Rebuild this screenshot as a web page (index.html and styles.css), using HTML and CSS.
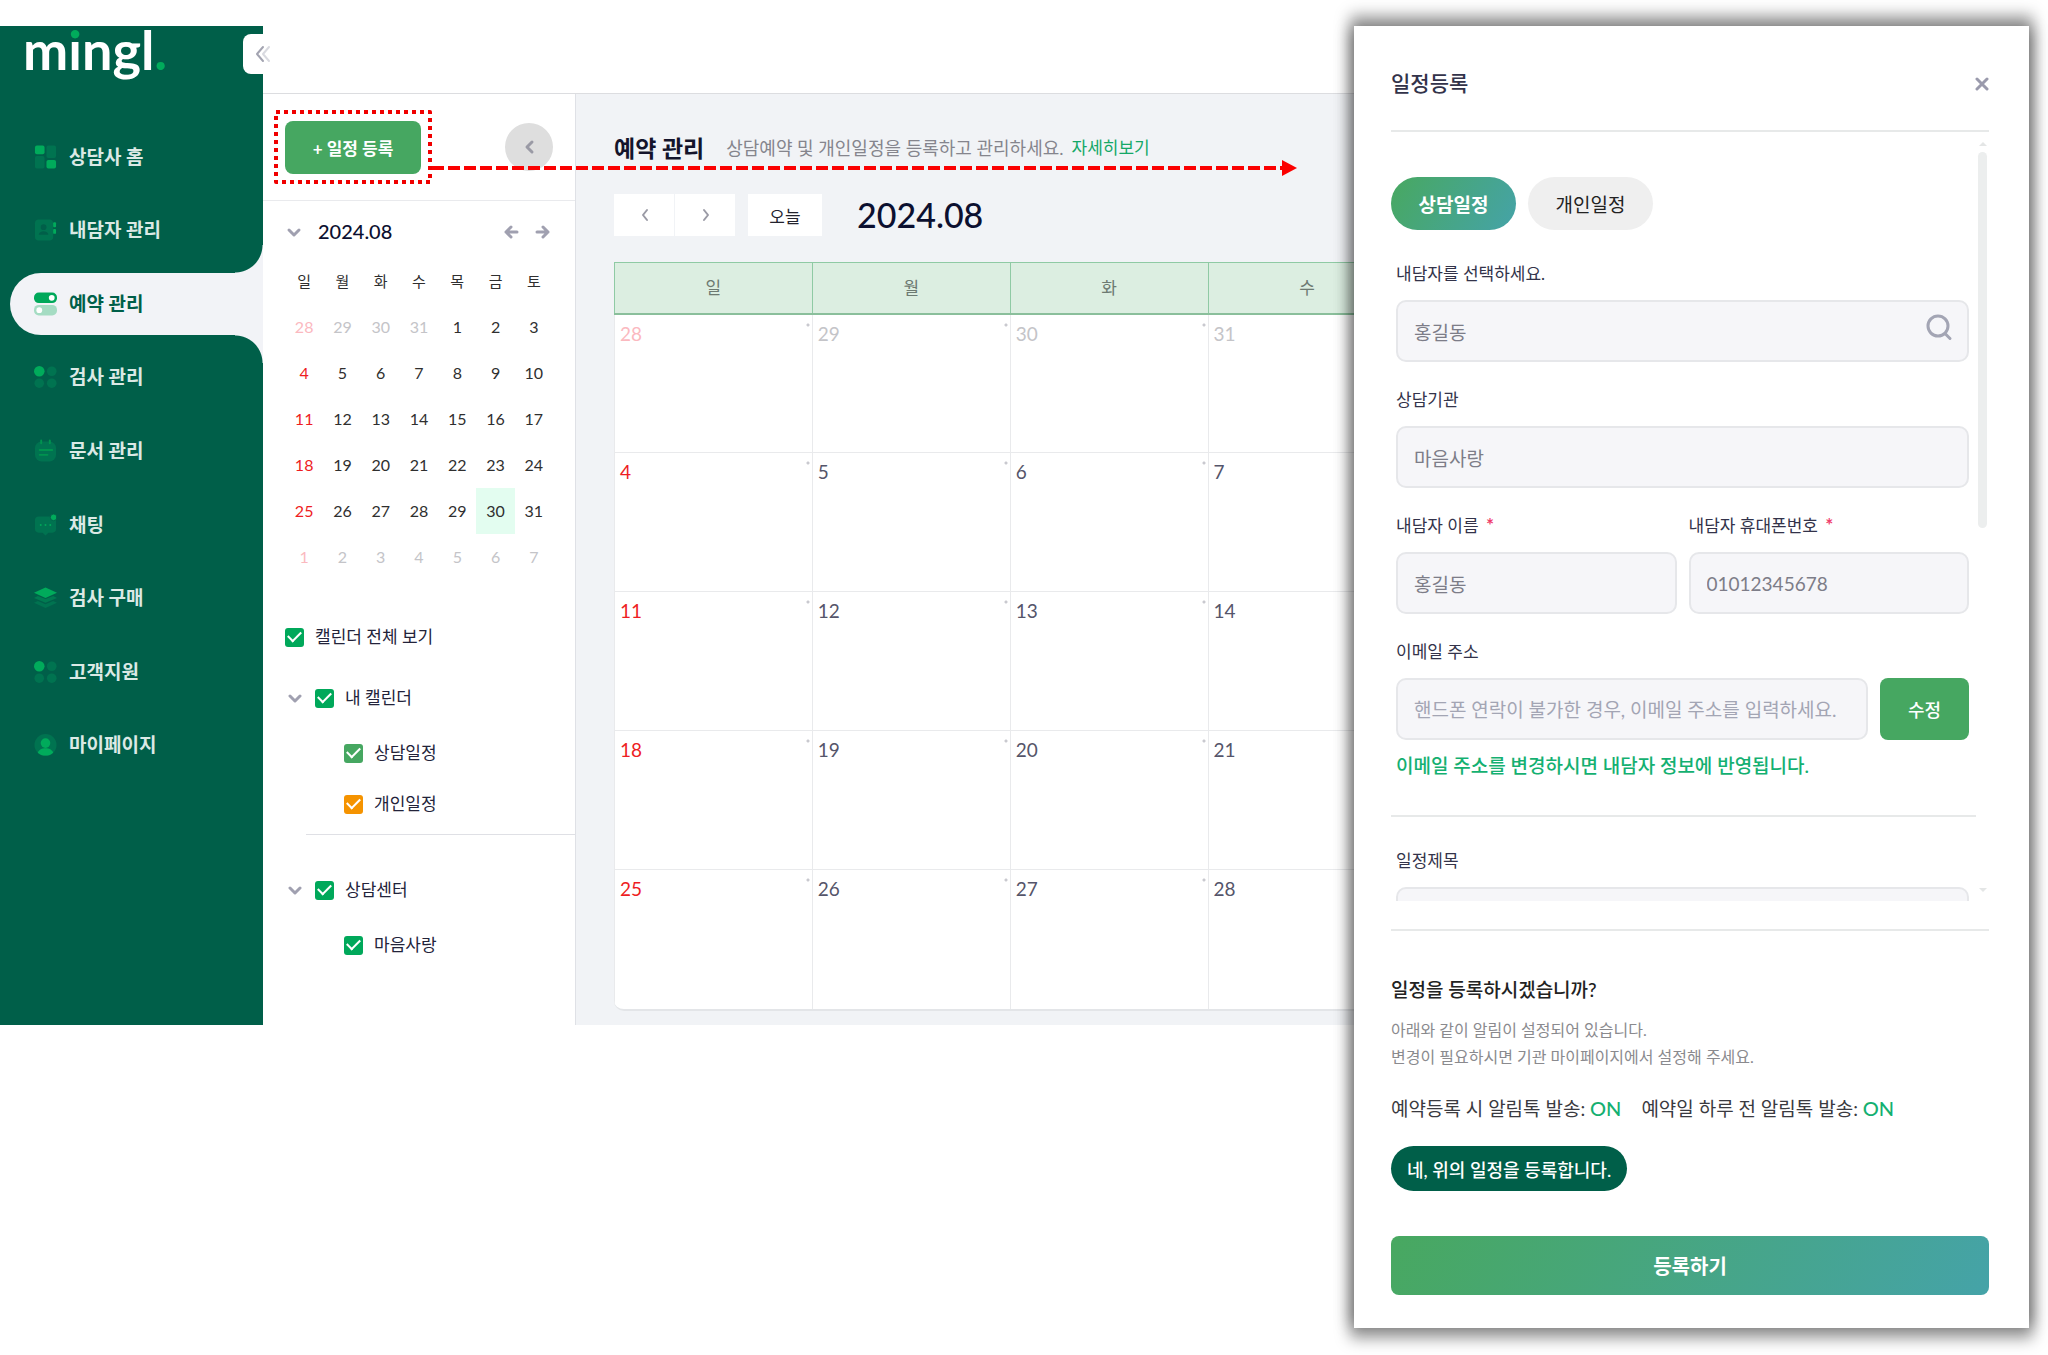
FILE: index.html
```html
<!DOCTYPE html>
<html lang="ko">
<head>
  <meta charset="UTF-8" />
  <meta name="viewport" content="width=device-width, initial-scale=1.0"/>
  <title>mingl. 예약 관리</title>
  <link rel="stylesheet" href="styles.css">
</head>
<body>
  <div class="app">
    <aside class="sidebar">
      <a class="logo" href="#">m<span class="logo-i">i</span>ngl<span class="logo-dot">.</span></a>
      <button class="collapse-button" aria-label="메뉴 접기">
        <svg width="20" height="20" viewBox="0 0 20 20"><path d="M10 3L4 10l6 7" stroke="#a3a4b1"/><path d="M16 3l-6 7 6 7" stroke="#d9dae0"/></svg>
      </button>
      <nav>
        <ul class="menu">
          <li><a href="#">
            <svg viewBox="0 0 24 24"><rect x="1" y="0" width="10" height="9" rx="2" fill="#00ab5b"/><rect x="13" y="0" width="10" height="13" rx="2" fill="#007350"/><rect x="1" y="11" width="10" height="13" rx="2" fill="#007350"/><rect x="13" y="15" width="10" height="9" rx="2" fill="#00ab5b"/></svg>
            상담사 홈</a></li>
          <li><a href="#">
            <svg viewBox="0 0 24 24"><rect x="1" y="1" width="19" height="22" rx="4" fill="#007350"/><circle cx="10" cy="9" r="3" fill="#005f49"/><path d="M5 17c0-5 10-5 10 0z" fill="#005f49"/><rect x="20" y="4" width="3" height="5" rx="1" fill="#00ab5b"/><rect x="20" y="11" width="3" height="5" rx="1" fill="#00ab5b"/></svg>
            내담자 관리</a></li>
          <li class="active"><a href="#">
            <svg viewBox="0 0 24 24"><rect x="0" y="0" width="24" height="11" rx="5" fill="#00a85a"/><circle cx="18.500" cy="5.500" r="3" fill="#fff"/><rect x="0" y="13" width="24" height="11" rx="5" fill="#a5dcc3"/><circle cx="5.500" cy="18.500" r="3" fill="#fff"/></svg>
            예약 관리</a></li>
          <li><a href="#">
            <svg viewBox="0 0 24 24"><circle cx="5.500" cy="6" r="5.500" fill="#00ab5b"/><circle cx="18.500" cy="6" r="5" fill="#007350"/><circle cx="5.500" cy="18.500" r="5" fill="#007350"/><circle cx="18.500" cy="18.500" r="5" fill="#007350"/></svg>
            검사 관리</a></li>
          <li><a href="#">
            <svg viewBox="0 0 24 24"><rect x="1" y="2" width="22" height="21" rx="7" fill="#007350"/><path d="M7.500 1v3M16.500 1v3M6 11h13M6 16h8" stroke="#00934f" stroke-width="2" stroke-linecap="round"/></svg>
            문서 관리</a></li>
          <li><a href="#">
            <svg viewBox="0 0 24 24"><path d="M5 3h14a4 4 0 0 1 4 4v9a4 4 0 0 1-4 4h-4l-3 3-3-3H5a4 4 0 0 1-4-4V7a4 4 0 0 1 4-4z" fill="#007350"/><circle cx="7" cy="12" r="1" fill="#00a85a"/><circle cx="12" cy="12" r="1" fill="#00a85a"/><circle cx="17" cy="12" r="1" fill="#00a85a"/><circle cx="20.500" cy="4" r="3.500" fill="#00ab5b" stroke="#005f49"/></svg>
            채팅</a></li>
          <li><a href="#">
            <svg viewBox="0 0 24 24"><path d="M0 17l12 5.500L24 17l-4-2-8 3.500L4 15z" fill="#007350"/><path d="M0 12l12 5 12-5-4-2-8 3-8-3z" fill="#007b51"/><path d="M0 6.500L12 1l12 5.500L12 12z" fill="#00ab5b"/></svg>
            검사 구매</a></li>
          <li><a href="#">
            <svg viewBox="0 0 24 24"><circle cx="5.500" cy="6" r="5.500" fill="#00ab5b"/><circle cx="18.500" cy="6" r="5" fill="#007350"/><circle cx="5.500" cy="18.500" r="5" fill="#007350"/><circle cx="18.500" cy="18.500" r="5" fill="#007350"/></svg>
            고객지원</a></li>
          <li><a href="#">
            <svg viewBox="0 0 24 24"><circle cx="12" cy="12" r="11.500" fill="#007350"/><circle cx="12" cy="10" r="5" fill="#00ab5b"/><path d="M4 20c2-6 14-6 16 0-4 4-12 4-16 0z" fill="#00ab5b"/></svg>
            마이페이지</a></li>
        </ul>
      </nav>
    </aside>

    <div class="content">
      <header class="topbar"></header>
      <div class="content-body">
        <section class="side-panel">
          <div class="panel-head">
            <button class="add-button">+ 일정 등록</button>
            <button class="round-button" aria-label="패널 접기">
              <svg width="20" height="20" viewBox="0 0 20 20"><path d="M13 5l-5 5 5 5" stroke="#9a9aa5" stroke-width="3"/></svg>
            </button>
          </div>

          <div class="mini-head">
            <button class="plain-button" aria-label="접기"><svg width="16" height="16" viewBox="0 0 16 16"><path d="M3 7l5 5 5-5" stroke-width="3"/></svg></button>
            <h2>2024.08</h2>
            <button class="plain-button" aria-label="이전 달"><svg width="16" height="16" viewBox="0 0 16 16"><path d="M14 9H3M8 4L3 9l5 5" stroke-width="3"/></svg></button>
            <button class="plain-button" aria-label="다음 달"><svg width="16" height="16" viewBox="0 0 16 16"><path d="M2 9h11M8 4l5 5-5 5" stroke-width="3"/></svg></button>
          </div>
          <table class="mini-calendar">
            <thead><tr><th>일</th><th>월</th><th>화</th><th>수</th><th>목</th><th>금</th><th>토</th></tr></thead>
            <tbody id="mini-body"></tbody>
          </table>

          <div class="calendar-list">
            <label class="check"><input type="checkbox" checked>캘린더 전체 보기</label>
            <div class="group">
              <div class="group-head">
                <button class="plain-button" aria-label="내 캘린더 접기"><svg width="14" height="16" viewBox="0 0 14 16"><path d="M2 6l5 5 5-5" stroke-width="3"/></svg></button>
                <label class="check"><input type="checkbox" checked>내 캘린더</label>
              </div>
              <label class="check sub"><input type="checkbox" class="soft-green" checked>상담일정</label>
              <label class="check sub"><input type="checkbox" class="orange" checked>개인일정</label>
            </div>
            <div class="group">
              <div class="group-head">
                <button class="plain-button" aria-label="상담센터 접기"><svg width="14" height="16" viewBox="0 0 14 16"><path d="M2 6l5 5 5-5" stroke-width="3"/></svg></button>
                <label class="check"><input type="checkbox" checked>상담센터</label>
              </div>
              <label class="check sub"><input type="checkbox" checked>마음사랑</label>
            </div>
          </div>
        </section>

        <main class="main">
          <div class="page-head">
            <h1>예약 관리</h1>
            <p>상담예약 및 개인일정을 등록하고 관리하세요.</p>
            <a href="#">자세히보기</a>
          </div>
          <div class="toolbar">
            <div class="pager">
              <button aria-label="이전"><svg width="16" height="16" viewBox="0 0 16 16"><path d="M10 3L6 8l4 5" stroke-width="2"/></svg></button>
              <button aria-label="다음"><svg width="16" height="16" viewBox="0 0 16 16"><path d="M6 3l4 5-4 5" stroke-width="2"/></svg></button>
            </div>
            <button class="today-button">오늘</button>
            <h2>2024.08</h2>
          </div>
          <div class="calendar-wrap">
            <table class="calendar">
              <thead><tr><th>일</th><th>월</th><th>화</th><th>수</th><th>목</th><th>금</th><th>토</th></tr></thead>
              <tbody id="calendar-body"></tbody>
            </table>
          </div>
        </main>
      </div>
    </div>
  </div>

  <!-- 일정 등록 버튼 강조 표시 + 화살표 -->
  <svg class="highlight" width="158" height="74" viewBox="0 0 158 74"><rect x="2" y="2" width="154" height="70"/></svg>
  <div class="guide-arrow"></div>

  <form class="modal" id="schedule-form">
    <div class="modal-head">
      <h2>일정등록</h2>
      <button type="button" class="close-button" aria-label="닫기"><svg width="16" height="16" viewBox="0 0 16 16"><path d="M4 4l10 10M14 4L4 14" stroke-width="3"/></svg></button>
    </div>

    <div class="modal-scroll">
      <div class="tabs">
        <button type="button" class="tab active">상담일정</button>
        <button type="button" class="tab">개인일정</button>
      </div>
      <div class="fields">
        <div class="field">
          <label for="client-search">내담자를 선택하세요.</label>
          <div class="search-box">
            <input type="text" id="client-search" value="홍길동">
            <svg width="28" height="28" viewBox="0 0 28 28"><circle cx="13" cy="12" r="10"/><path d="M20 19.500l5 5"/></svg>
          </div>
        </div>
        <div class="field">
          <label for="center">상담기관</label>
          <input type="text" id="center" value="마음사랑">
        </div>
        <div class="field-row">
          <div class="field">
            <label for="client-name">내담자 이름 <span class="required">*</span></label>
            <input type="text" id="client-name" value="홍길동">
          </div>
          <div class="field">
            <label for="client-phone">내담자 휴대폰번호 <span class="required">*</span></label>
            <input type="text" id="client-phone" value="01012345678">
          </div>
        </div>
        <div class="field">
          <label for="email">이메일 주소</label>
          <div class="email-row">
            <input type="text" id="email" placeholder="핸드폰 연락이 불가한 경우, 이메일 주소를 입력하세요.">
            <button type="button" class="edit-button">수정</button>
          </div>
          <p class="note">이메일 주소를 변경하시면 내담자 정보에 반영됩니다.</p>
        </div>
      </div>
      <div class="fields fields-next">
        <div class="field">
          <label for="subject">일정제목</label>
          <input type="text" id="subject">
        </div>
      </div>
      <div class="scrollbar">
        <span class="arrow-up"></span>
        <span class="thumb"></span>
        <span class="arrow-down"></span>
      </div>
    </div>

    <div class="modal-foot">
      <h3>일정을 등록하시겠습니까?</h3>
      <p class="desc">아래와 같이 알림이 설정되어 있습니다.<br>변경이 필요하시면 기관 마이페이지에서 설정해 주세요.</p>
      <p class="alarms">
        <span>예약등록 시 알림톡 발송: <b>ON</b></span>
        <span>예약일 하루 전 알림톡 발송: <b>ON</b></span>
      </p>
      <button type="button" class="confirm-button">네, 위의 일정을 등록합니다.</button>
      <button type="submit" class="submit-button">등록하기</button>
    </div>
  </form>

  <script src="script.js"></script>
</body>
</html>
```

FILE: styles.css
```css
* { box-sizing: border-box; }
body { margin: 0; padding: 26px 19px 0 0; min-height: 100vh; background: #fff; color: #2b2b3a; font-family: Lato, "Noto Sans CJK KR", sans-serif; font-size: 17px; line-height: 24px; position: relative; }
h1, h2, h3, p, ul { margin: 0; padding: 0; }
ul { list-style: none; }
a { color: inherit; text-decoration: none; }
button, input { font-family: inherit; }
button { border: none; padding: 0; background: none; cursor: pointer; }
svg { display: block; fill: none; stroke-linecap: round; stroke-linejoin: round; }
table { border-collapse: collapse; table-layout: fixed; width: 100%; }

.app { display: flex; }

/* 사이드바 */
.sidebar { width: 263px; flex: none; background: #005f49; position: relative; }
.logo { display: block; height: 94px; padding-left: 23px; font-size: 54px; line-height: 48px; font-weight: 700; color: #fff; }
.logo-i { background: linear-gradient(#00ab5b 23px, #fff 23px); -webkit-background-clip: text; background-clip: text; color: transparent; }
.logo-dot { color: #00ab5b; }
.collapse-button { position: absolute; top: 8px; right: -24px; width: 44px; height: 40px; padding-left: 10px; background: #fff; border-radius: 8px; }
.collapse-button svg { stroke-width: 2; }
.menu { display: flex; flex-direction: column; height: 662px; }
.menu li { flex: 1; display: flex; align-items: center; padding-left: 10px; }
.menu a { flex: 1; display: flex; align-items: center; gap: 12px; height: 62px; padding-left: 24px; font-size: 19px; font-weight: 700; color: #dbe9e5; position: relative; }
.menu svg { width: 23px; height: 24px; }
.menu .active a { background: #f2f3f7; color: #005f49; border-radius: 31px 0 0 31px; }
.menu .active a::before, .menu .active a::after { content: ""; position: absolute; right: 0; width: 28px; height: 28px; }
.menu .active a::before { top: -28px; background: radial-gradient(circle at 0 0, transparent 27px, #f2f3f7 28px); }
.menu .active a::after { bottom: -28px; background: radial-gradient(circle at 0 100%, transparent 27px, #f2f3f7 28px); }

.content { flex: 1; min-width: 0; }
.topbar { height: 68px; border-bottom: 1px solid #dcdde0; }
.content-body { display: flex; }

/* 왼쪽 캘린더 패널 */
.side-panel { width: 313px; flex: none; border-right: 1px solid #dfe1e6; }
.panel-head { display: flex; align-items: center; justify-content: space-between; height: 107px; padding: 0 22px; border-bottom: 1px solid #e9eaed; }
.add-button { width: 136px; height: 53px; border-radius: 8px; background: #46a761; color: #fff; font-size: 17px; font-weight: 700; }
.round-button { display: flex; align-items: center; justify-content: center; width: 48px; height: 48px; border-radius: 50%; background: #dedede; }
.plain-button svg { stroke: #a0a0b0; }
.mini-head { display: flex; align-items: center; gap: 16px; padding: 18px 24px 0 23px; }
.mini-head h2 { flex: 1; font-size: 20px; font-weight: 500; color: #0c1030; }
.mini-calendar { width: 268px; margin: 15px 22px 0; }
.mini-calendar th, .mini-calendar td { height: 46px; padding: 0; text-align: center; font-size: 16px; font-weight: 400; color: #2f2f2f; }
.mini-calendar th { font-size: 15px; }
.sun { color: #ee1d23 !important; }
.other { color: #c4c4c8 !important; }
.sun.other { color: #fbb9bf !important; }
.mini-calendar .today { background: #e3fdf0; }

.calendar-list { padding: 45px 0 0 22px; }
.check { display: flex; align-items: center; gap: 11px; height: 24px; font-size: 17px; color: #23233a; }
.check input { appearance: none; width: 19px; height: 19px; margin: 0; border-radius: 3px; background: #00a85a; display: grid; place-items: center; }
.check input::after { content: ""; width: 11px; height: 6px; border: solid #fff; border-width: 0 0 2px 2px; transform: translateY(-2px) rotate(-45deg); }
.check .soft-green { background: #46a761; }
.check .orange { background: #f59300; }
.group { padding: 37px 0 18px; }
.group + .group { margin-left: 21px; padding-top: 43px; border-top: 1px solid #dfe0e5; }
.group + .group .group-head { margin-left: -21px; }
.group + .group .sub { margin-left: 38px; }
.group-head { display: flex; align-items: center; gap: 13px; padding-left: 3px; }
.sub { margin: 31px 0 0 59px; }
.sub + .sub { margin-top: 27px; }

/* 메인 캘린더 */
.main { flex: 1; min-width: 0; padding: 39px 29px 14px 38px; background: #f1f3f6; }
.page-head { display: flex; align-items: center; height: 30px; white-space: nowrap; }
.page-head h1 { font-size: 23px; font-weight: 700; color: #14142b; margin-right: 22px; }
.page-head p { font-size: 18px; color: #85858d; margin-right: 8px; }
.page-head a { font-size: 17px; color: #14a867; }
.toolbar { display: flex; align-items: center; gap: 13px; height: 42px; margin: 31px 0 26px; }
.pager { display: flex; gap: 1px; height: 42px; }
.pager button { width: 60px; height: 42px; padding-left: 23px; background: #fff; }
.pager svg { stroke: #9a9aa5; }
.today-button { width: 74px; height: 42px; background: #fff; font-size: 17px; color: #23232e; }
.toolbar h2 { margin-left: 22px; font-size: 34px; font-weight: 500; color: #0c1030; }
.calendar-wrap { background: #fff; border-bottom: 2px solid #e3e5e8; border-radius: 0 0 10px 10px; overflow: hidden; }
.calendar th { height: 51px; padding: 0; border: 1px solid #8fcaa4; border-bottom: 2px solid #8abf9b; background: #dceee1; font-size: 17px; font-weight: 400; color: #6d7a72; }
.calendar td { height: 139px; padding: 7px 5px; vertical-align: top; border: 1px solid #e9eaec; font-size: 19px; color: #55556a; background: radial-gradient(circle, #c9c9cf 1px, transparent 2px) right 2px top 8px / 4px 4px no-repeat; }
.calendar tr:last-child td { border-bottom: none; }

.highlight { position: absolute; left: 274px; top: 110px; stroke: #f00000; stroke-width: 4; stroke-dasharray: 4 4; stroke-linecap: butt; }
.guide-arrow { position: absolute; left: 432px; top: 166px; width: 851px; height: 4px; background: repeating-linear-gradient(90deg, #fb0000 0 12px, transparent 12px 16px); }
.guide-arrow::after { content: ""; position: absolute; right: -14px; top: -6px; border: solid transparent; border-width: 8px 0 8px 15px; border-left-color: #fb0000; }

/* 일정등록 모달 */
.modal { position: absolute; top: 26px; right: 19px; width: 675px; padding: 40px 40px 33px 37px; background: #fff; box-shadow: 0 -7px 14px 4px rgba(0, 0, 0, 0.37), 0 7px 14px 4px rgba(0, 0, 0, 0.37); }
.modal-head { display: flex; align-items: center; justify-content: space-between; height: 66px; padding-bottom: 30px; border-bottom: 2px solid #e7e9e9; }
.modal-head h2 { font-size: 21px; font-weight: 500; color: #33334a; }
.close-button svg { stroke: #9a9aac; }
.modal-scroll { position: relative; height: 769px; padding: 45px 13px 0 0; overflow: hidden; }
.tabs { display: flex; gap: 12px; }
.tab { width: 125px; height: 53px; border-radius: 27px; background: #efefef; font-size: 19px; color: #222; }
.tab.active { background: linear-gradient(120deg, #48a860, #45a3a8); color: #fff; font-weight: 700; }
.fields { display: flex; flex-direction: column; gap: 26px; padding: 32px 7px 0 5px; }
.field { flex: 1; min-width: 0; }
.field label { display: block; margin-bottom: 14px; font-size: 17px; color: #33334a; }
.required { color: #ef3e6d; margin-left: 3px; font-size: 19px; font-weight: 700; line-height: 20px; }
.field input { display: block; width: 100%; height: 62px; padding: 0 16px; border: 2px solid #e6e7ea; border-radius: 10px; background: #f6f6f9; font-size: 19px; color: #7d7d88; }
.field input::placeholder { color: #a3a5b4; }
.field-row { display: flex; gap: 12px; }
.search-box { position: relative; }
.search-box svg { position: absolute; right: 16px; top: 14px; stroke: #a3a5b4; stroke-width: 3; }
.email-row { display: flex; gap: 12px; }
.edit-button { flex: none; width: 89px; height: 62px; border-radius: 8px; background: #46a761; color: #fff; font-size: 18px; font-weight: 500; }
.note { margin-top: 14px; font-size: 19px; font-weight: 500; color: #14b071; }
.fields-next { margin-top: 37px; border-top: 2px solid #e7e9e9; }
.scrollbar { position: absolute; right: 2px; top: 10px; width: 9px; height: 750px; display: flex; flex-direction: column; align-items: center; }
.arrow-up { border: 4px solid transparent; border-top: none; border-bottom-color: #e4e6e6; }
.thumb { width: 9px; height: 376px; margin-top: 6px; border-radius: 5px; background: #eceeee; }
.arrow-down { margin-top: auto; border: 4px solid transparent; border-bottom: none; border-top-color: #e4e6e6; }
.modal-foot { margin-top: 28px; padding-top: 47px; border-top: 2px solid #e7e9e9; }
.modal-foot h3 { font-size: 19px; font-weight: 500; color: #222; }
.desc { margin-top: 14px; font-size: 16px; line-height: 27px; color: #8a8a8e; }
.alarms { display: flex; gap: 20px; margin: 26px 0 25px; font-size: 19px; color: #3a3a40; white-space: nowrap; }
.alarms b { font-weight: 500; font-size: 20px; color: #14b071; }
.confirm-button { display: block; height: 45px; padding: 0 16px; border-radius: 23px; background: #005f49; color: #fff; font-size: 18px; font-weight: 500; }
.submit-button { display: block; width: 100%; height: 59px; margin-top: 45px; border-radius: 8px; background: linear-gradient(120deg, #48a860, #45a3a8); color: #fff; font-size: 20px; font-weight: 700; }
```

FILE: script.js
```js
const miniBody = document.getElementById('mini-body');
const calendarBody = document.getElementById('calendar-body');
const form = document.getElementById('schedule-form');

// 2024년 8월 달력의 첫 칸은 7월 28일
const YEAR = 2024;
const MONTH = 7;
const TODAY = 30;

function renderWeeks(body, weeks, markToday) {
  for (let w = 0; w < weeks; w++) {
    const tr = document.createElement('tr');
    for (let d = 0; d < 7; d++) {
      const date = new Date(YEAR, MONTH, w * 7 + d - 3);
      const td = document.createElement('td');
      td.textContent = date.getDate();
      if (d === 0) td.classList.add('sun');
      if (date.getMonth() !== MONTH) {
        td.classList.add('other');
      } else if (markToday && date.getDate() === TODAY) {
        td.classList.add('today');
      }
      tr.appendChild(td);
    }
    body.appendChild(tr);
  }
}

renderWeeks(miniBody, 6, true);
renderWeeks(calendarBody, 5, false);

form.addEventListener('submit', function (event) {
  event.preventDefault();
});
```
